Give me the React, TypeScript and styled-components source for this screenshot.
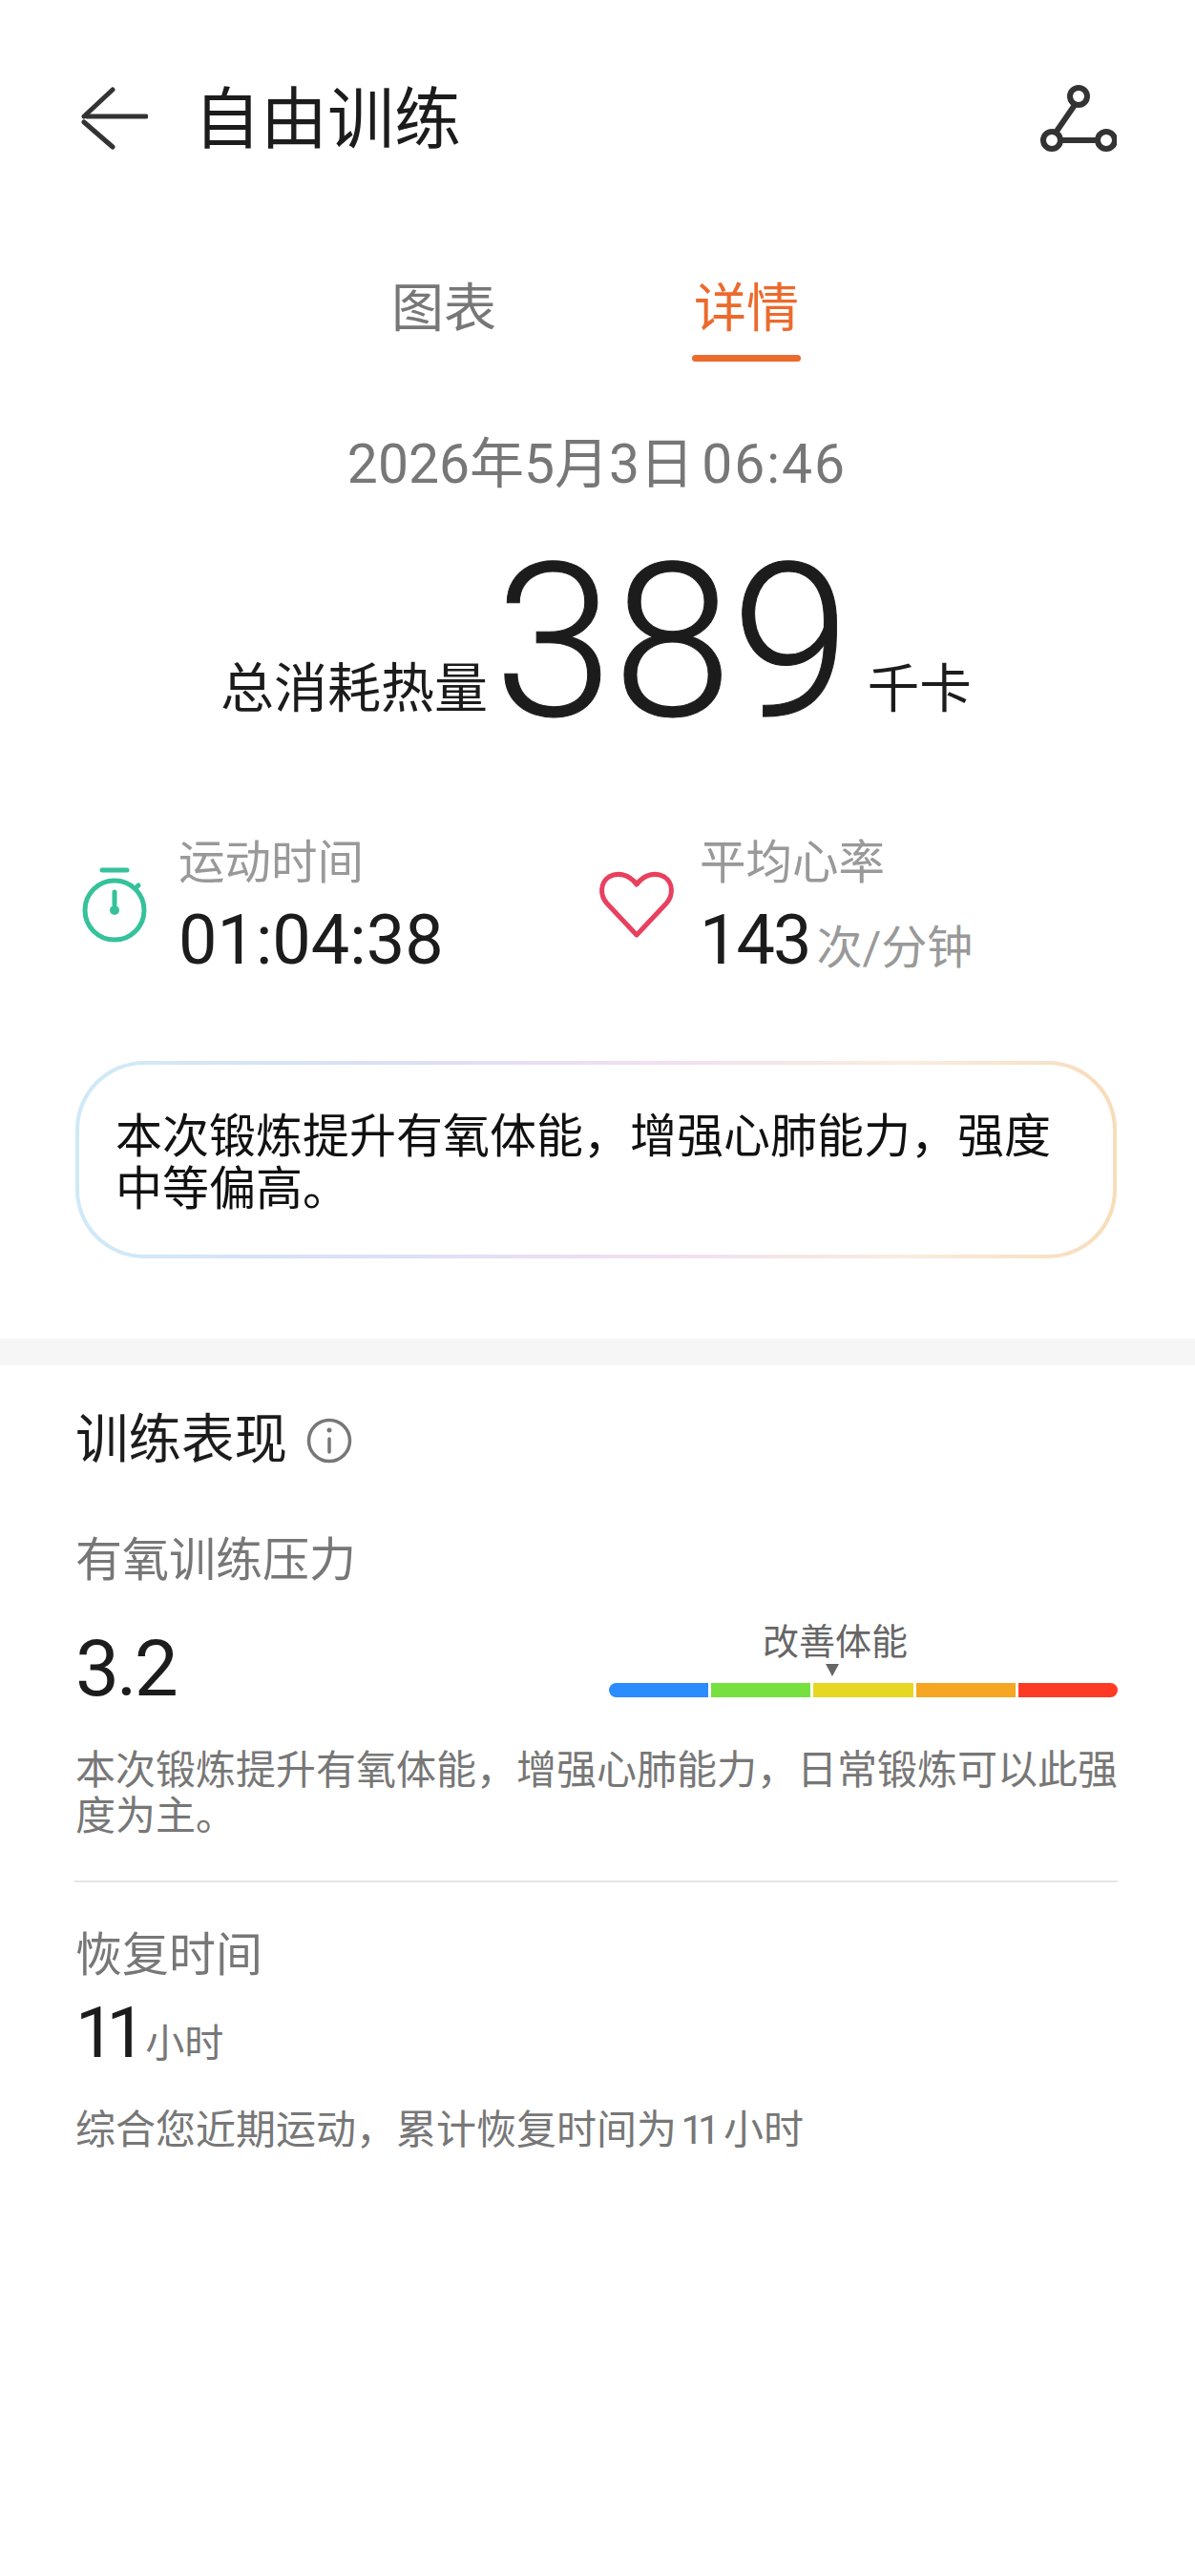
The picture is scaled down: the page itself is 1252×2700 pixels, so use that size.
import styled, { createGlobalStyle } from 'styled-components';

const FONT = 'Roboto, "Noto Sans CJK SC", sans-serif';

const ZONES = [
  { color: '#2a8cff' },
  { color: '#76e040' },
  { color: '#e6d723' },
  { color: '#f5a623' },
  { color: '#ff3a24' },
];

const GlobalStyle = createGlobalStyle`
  html, body {
    margin: 0;
    padding: 0;
    background: #fff;
  }
  body {
    font-family: ${FONT};
    color: #1c1c1c;
  }
`;

// ========== Layout ==========
const Page = styled.div`
  width: 1252px;
  min-height: 2700px;
  background: #fff;
  overflow: hidden;
`;

const TopBlock = styled.section`
  padding: 84px 82px 84px 79px;
`;

const BottomBlock = styled.section`
  padding: 44px 81px 0 79px;
`;

const Band = styled.div`
  height: 28px;
  background: #f6f6f6;
`;

// ========== Header ==========
const Header = styled.header`
  display: flex;
  align-items: center;
  height: 80px;
`;

const BackIcon = styled.svg`
  width: 70px;
  height: 66px;
  margin-left: 6px;
  flex-shrink: 0;
`;

const Title = styled.h1`
  margin: 4px 0 0 48px;
  flex: 1;
  font-size: 70px;
  font-weight: 400;
  line-height: 80px;
  color: #1c1c1c;
`;

const RouteIcon = styled.svg`
  width: 80px;
  height: 72px;
  flex-shrink: 0;
`;

// ========== Tabs ==========
const Tabs = styled.nav`
  display: flex;
  margin: 129px 0 0 329px;
  gap: 203px;
`;

const Tab = styled.div<{ $active?: boolean }>`
  display: flex;
  flex-direction: column;
  align-items: center;
  width: 114px;
  font-size: 55px;
  line-height: 60px;
  color: ${({ $active }) => ($active ? '#ec6a2c' : '#777')};

  &::after {
    content: '';
    width: 114px;
    height: 7px;
    margin-top: 19px;
    border-radius: 4px;
    background: ${({ $active }) => ($active ? '#ec6a2c' : 'transparent')};
  }
`;

// ========== Summary ==========
const DateLine = styled.div`
  margin: 78px 0 0 2px;
  text-align: center;
  font-size: 57px;
  line-height: 60px;
  word-spacing: -6px;
  color: #777;
`;

const DateTime = styled.span`
  letter-spacing: 2px;
`;

const Hero = styled.div`
  display: flex;
  align-items: flex-end;
  margin: 37px 0 0 152px;
`;

const HeroLabel = styled.span`
  margin-bottom: 42px;
  font-size: 56px;
  line-height: 60px;
  color: #1c1c1c;
`;

const HeroValue = styled.span`
  margin: 0 18px 0 7px;
  font-size: 224px;
  font-weight: 300;
  line-height: 240px;
  letter-spacing: 0;
  -webkit-text-stroke: 1px #1c1c1c;
  color: #1c1c1c;
`;

const HeroUnit = styled.span`
  margin-bottom: 42px;
  font-size: 54.5px;
  line-height: 60px;
`;

const Stats = styled.div`
  display: grid;
  grid-template-columns: 548px 1fr;
  margin-top: 80px;
`;

const Stat = styled.div<{ $gap: number }>`
  display: flex;
  align-items: flex-start;
  gap: ${({ $gap }) => $gap}px;
`;

const StatIcon = styled.svg`
  width: 80px;
  height: 80px;
  margin-top: 35px;
  flex-shrink: 0;
`;

const StatBody = styled.div`
  display: flex;
  flex-direction: column;
  gap: 9px;
`;

const StatLabel = styled.div`
  margin-top: 1px;
  font-size: 48.5px;
  line-height: 60px;
  color: #999;
`;

const StatValue = styled.div`
  height: 84px;
  font-size: 72px;
  line-height: 84px;
  color: #1c1c1c;
`;

const TightDigits = styled.span`
  letter-spacing: -2px;
`;

const StatUnit = styled.span`
  margin-left: 7px;
  font-size: 48px;
  line-height: 1;
  color: #999;
`;

const Insight = styled.div`
  box-sizing: border-box;
  height: 207px;
  margin-top: 84px;
  padding: 48px 38px 0;
  border: 4px solid transparent;
  border-radius: 72px;
  background:
    linear-gradient(#fff, #fff) padding-box,
    linear-gradient(90deg, #cfeaf6 0%, #dcdff6 30%, #f0dff1 55%, #f9ecdf 80%, #f8dcb9 100%) border-box;
  font-size: 49px;
  line-height: 55px;
  color: #111;
`;

// ========== 训练表现 ==========
const SectionTitle = styled.h2`
  display: flex;
  align-items: center;
  gap: 20px;
  margin: 0;
  font-size: 55.5px;
  font-weight: 400;
  line-height: 70px;
  color: #1c1c1c;
`;

const InfoIcon = styled.svg`
  width: 48px;
  height: 48px;
`;

const MetricLabel = styled.div<{ $top: number }>`
  margin-top: ${({ $top }) => $top}px;
  font-size: 49px;
  line-height: 60px;
  color: #777;
`;

const ScoreRow = styled.div`
  display: flex;
  justify-content: space-between;
  margin-top: 35px;
`;

const Score = styled.div`
  font-size: 82px;
  line-height: 96px;
  letter-spacing: -3px;
  color: #1c1c1c;
`;

const Gauge = styled.div`
  width: 533px;
`;

const Marker = styled.div`
  display: flex;
  flex-direction: column;
  align-items: center;
  width: 160px;
  margin-left: 157px;
  font-size: 38px;
  line-height: 40px;
  white-space: nowrap;
  color: #666;
`;

const Pointer = styled.div`
  width: 0;
  height: 0;
  margin: 3px 6px 0 0;
  border-left: 7px solid transparent;
  border-right: 7px solid transparent;
  border-top: 13px solid #666;
`;

const ZoneBar = styled.div`
  display: flex;
  gap: 3px;
  height: 15px;
  margin-top: 7px;
  border-radius: 8px;
  overflow: hidden;
`;

const Zone = styled.div<{ $color: string }>`
  flex: 1;
  background: ${({ $color }) => $color};
`;

const Note = styled.p<{ $top: number }>`
  margin: ${({ $top }) => $top}px 0 0;
  font-size: 42px;
  line-height: 48px;
  word-spacing: -6px;
  color: #777;
`;

const NoteDigits = styled.span`
  margin-right: 5px;
  letter-spacing: -6px;
`;

const Rule = styled.hr`
  height: 2px;
  margin: 43px 0 0 -1px;
  border: 0;
  background: #e6e6e6;
`;

const Recovery = styled.div`
  height: 80px;
  margin-top: 11px;
  font-size: 74px;
  line-height: 80px;
  letter-spacing: -9px;
  color: #1c1c1c;
`;

const RecoveryUnit = styled.span`
  margin-left: 8px;
  font-size: 41px;
  line-height: 1;
  letter-spacing: 0;
  color: #777;
`;

function App() {
  return (
    <Page>
      <GlobalStyle />
      <TopBlock>
        <Header>
          <BackIcon viewBox="0 0 70 66" fill="none" stroke="#333" strokeWidth="5" strokeLinecap="round">
            <path d="M68 31H6" />
            <path d="M33 3 3 31" />
            <path d="M3 37 33 63" />
          </BackIcon>
          <Title>自由训练</Title>
          <RouteIcon viewBox="0 0 80 72" fill="none" stroke="#333" strokeWidth="6">
            <circle cx="40" cy="13" r="9" />
            <circle cx="12" cy="59" r="9" />
            <circle cx="69" cy="59" r="9" />
            <path d="M36 22 16 51" />
            <path d="M21 59h39" />
          </RouteIcon>
        </Header>

        <Tabs>
          <Tab>图表</Tab>
          <Tab $active>详情</Tab>
        </Tabs>

        <DateLine>
          2026年5月3日 <DateTime>06:46</DateTime>
        </DateLine>

        <Hero>
          <HeroLabel>总消耗热量</HeroLabel>
          <HeroValue>389</HeroValue>
          <HeroUnit>千卡</HeroUnit>
        </Hero>

        <Stats>
          <Stat $gap={28}>
            <StatIcon viewBox="0 0 80 80" fill="none" stroke="#35c29a" strokeWidth="5" strokeLinecap="round">
              <path d="M28 3h26" strokeWidth="5" />
              <circle cx="41" cy="45" r="31" />
              <path d="M63 22l3-3" />
              <path d="M41 26v13" />
              <circle cx="41" cy="45" r="5" fill="#35c29a" stroke="none" />
            </StatIcon>
            <StatBody>
              <StatLabel>运动时间</StatLabel>
              <StatValue>01:04:38</StatValue>
            </StatBody>
          </Stat>
          <Stat $gap={26}>
            <StatIcon viewBox="0 0 80 70" fill="none" stroke="#e8405f" strokeWidth="5" strokeLinejoin="round">
              <path d="M40 66 9 33C1 24 2 11 11 5c9-5 21-3 29 8 8-11 20-13 29-8 9 6 10 19 2 28Z" />
            </StatIcon>
            <StatBody>
              <StatLabel>平均心率</StatLabel>
              <StatValue>
                <TightDigits>143</TightDigits>
                <StatUnit>次/分钟</StatUnit>
              </StatValue>
            </StatBody>
          </Stat>
        </Stats>

        <Insight>本次锻炼提升有氧体能，增强心肺能力，强度中等偏高。</Insight>
      </TopBlock>

      <Band />

      <BottomBlock>
        <SectionTitle>
          训练表现
          <InfoIcon viewBox="0 0 48 48" fill="none" stroke="#777" strokeWidth="3.5" strokeLinecap="round">
            <circle cx="24" cy="24" r="21.5" />
            <path d="M24 22v14" />
            <circle cx="24" cy="13" r="2.5" fill="#777" stroke="none" />
          </InfoIcon>
        </SectionTitle>

        <MetricLabel $top={61}>有氧训练压力</MetricLabel>
        <ScoreRow>
          <Score>3.2</Score>
          <Gauge>
            <Marker>
              改善体能
              <Pointer />
            </Marker>
            <ZoneBar>
              {ZONES.map((z) => (
                <Zone key={z.color} $color={z.color} />
              ))}
            </ZoneBar>
          </Gauge>
        </ScoreRow>
        <Note $top={35}>本次锻炼提升有氧体能，增强心肺能力，日常锻炼可以此强度为主。</Note>

        <Rule />

        <MetricLabel $top={47}>恢复时间</MetricLabel>
        <Recovery>
          11
          <RecoveryUnit>小时</RecoveryUnit>
        </Recovery>
        <Note $top={38}>
          综合您近期运动，累计恢复时间为 <NoteDigits>11</NoteDigits> 小时
        </Note>
      </BottomBlock>
    </Page>
  );
}

export default App;
